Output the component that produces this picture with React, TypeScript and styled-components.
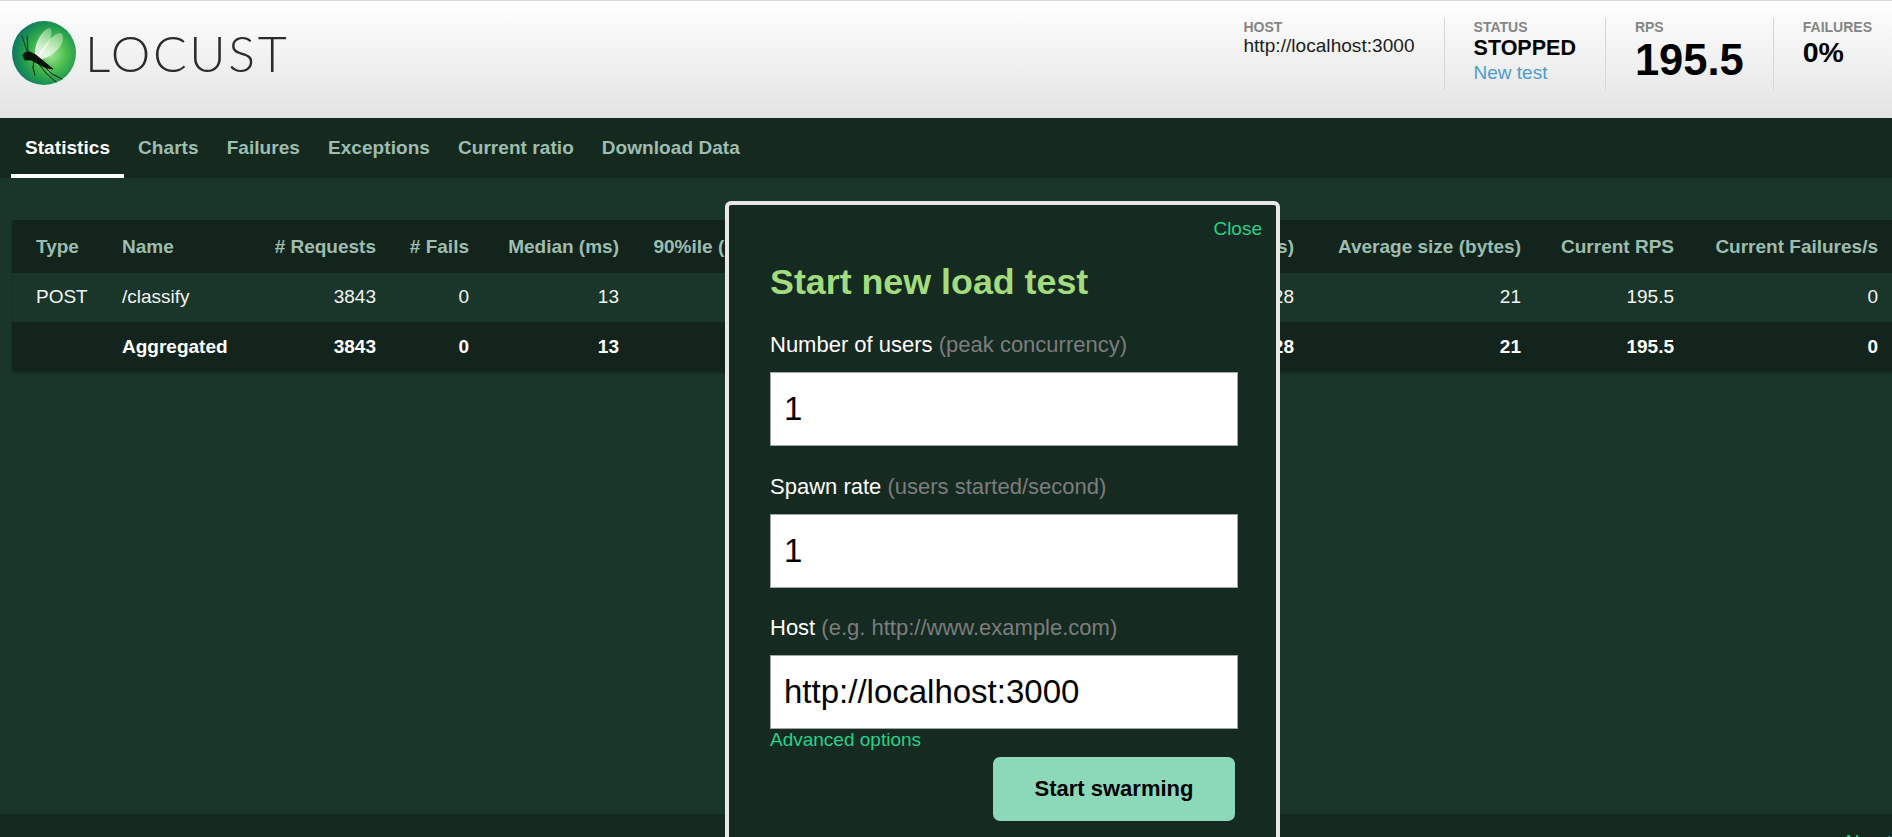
import React from "react";
import styled, { createGlobalStyle } from "styled-components";

const GlobalStyle = createGlobalStyle`
  html, body {
    margin: 0;
    height: 100%;
    overflow: hidden;
    font-family: "Liberation Sans", Arial, sans-serif;
    font-size: 19px;
    background: #1a3529;
  }
  #root {
    height: 100%;
  }
`;

const columns = [
  { title: "Type", width: 96, left: true },
  { title: "Name", width: 160, left: true },
  { title: "# Requests", width: 122 },
  { title: "# Fails", width: 93 },
  { title: "Median (ms)", width: 150 },
  { title: "90%ile (ms)", width: 139 },
  { title: "99%ile (ms)", width: 134 },
  { title: "Average (ms)", width: 134 },
  { title: "Min (ms)", width: 134 },
  { title: "Max (ms)", width: 134 },
  { title: "Average size (bytes)", width: 227 },
  { title: "Current RPS", width: 153 },
  { title: "Current Failures/s", width: 204 },
];

const rowCells = ["3843", "0", "13", "15", "21", "13.4", "8", "28", "21", "195.5", "0"];

function Logo() {
  return (
    <svg width="64" height="64" viewBox="12 21 64 64">
      <defs>
        <radialGradient id="orb" cx="60%" cy="52%" r="58%">
          <stop offset="0%" stopColor="#9fe69a" />
          <stop offset="40%" stopColor="#4fc04f" />
          <stop offset="75%" stopColor="#1f9a4f" />
          <stop offset="100%" stopColor="#0f7a62" />
        </radialGradient>
        <linearGradient id="wing" x1="0" y1="1" x2="1" y2="0">
          <stop offset="0%" stopColor="#ffffff" stopOpacity="0.95" />
          <stop offset="100%" stopColor="#e4f7d8" stopOpacity="0.35" />
        </linearGradient>
      </defs>
      <circle cx="44" cy="53" r="32" fill="url(#orb)" />
      <path d="M35 56 C34 44 41 31 49 28 C53 28 52 37 48 45 C44 52 39 58 35 56Z" fill="url(#wing)" />
      <path d="M37 58 C42 47 53 33 61 33 C65 36 63 46 55 52 C49 57 41 61 37 58Z" fill="url(#wing)" />
      <g fill="#0a140e" stroke="#0a140e" strokeLinecap="round">
        <path d="M23 55 C24 52 28 51 30 52 L36 55 L53 69 L46 68 L31 60 L25 60Z" strokeWidth="0.8" />
        <path d="M27 51 L22 36 M28 51 L27 36" fill="none" strokeWidth="0.8" />
        <path d="M34 60 L33 68 L35 75 M38 63 L46 73 L56 82 M44 66 L52 74 L62 79" fill="none" strokeWidth="1" />
      </g>
    </svg>
  );
}

function App() {
  return (
    <Page>
      <GlobalStyle />
      <Header>
        <Brand>
          <Logo />
          <Wordmark>LOCUST</Wordmark>
        </Brand>
        <Stats>
          <Stat>
            <StatLabel>HOST</StatLabel>
            <HostValue>http://localhost:3000</HostValue>
          </Stat>
          <Stat>
            <StatLabel>STATUS</StatLabel>
            <StatusValue>STOPPED</StatusValue>
            <NewTest href="#">New test</NewTest>
          </Stat>
          <Stat>
            <StatLabel>RPS</StatLabel>
            <RpsValue>195.5</RpsValue>
          </Stat>
          <Stat $last>
            <StatLabel>FAILURES</StatLabel>
            <FailValue>0%</FailValue>
          </Stat>
        </Stats>
      </Header>

      <Tabs>
        {["Statistics", "Charts", "Failures", "Exceptions", "Current ratio", "Download Data"].map(
          (t, i) => (
            <Tab key={t} $active={i === 0}>
              {t}
            </Tab>
          )
        )}
      </Tabs>

      <Main>
        <TableWrap>
          <Table>
            <colgroup>
              {columns.map((c) => (
                <Col key={c.title} $w={c.width} />
              ))}
            </colgroup>
            <thead>
              <tr>
                {columns.map((c) => (
                  <Th key={c.title} $left={c.left}>
                    {c.title}
                  </Th>
                ))}
              </tr>
            </thead>
            <tbody>
              <Row>
                <Td $left>POST</Td>
                <Td $left>/classify</Td>
                {rowCells.map((v, i) => (
                  <Td key={i}>{v}</Td>
                ))}
              </Row>
              <TotalRow>
                <Td $left />
                <Td $left>Aggregated</Td>
                {rowCells.map((v, i) => (
                  <Td key={i}>{v}</Td>
                ))}
              </TotalRow>
            </tbody>
          </Table>
        </TableWrap>
      </Main>

      <Footer>
        <FooterLink href="#">About</FooterLink>
      </Footer>

      <Modal>
        <CloseLink href="#">Close</CloseLink>
        <Title>Start new load test</Title>
        <Field>
          <FieldLabel>
            Number of users <Hint>(peak concurrency)</Hint>
          </FieldLabel>
          <Input defaultValue="1" />
        </Field>
        <Field>
          <FieldLabel>
            Spawn rate <Hint>(users started/second)</Hint>
          </FieldLabel>
          <Input defaultValue="1" />
        </Field>
        <Field>
          <FieldLabel>
            Host <Hint>(e.g. http://www.example.com)</Hint>
          </FieldLabel>
          <Input defaultValue="http://localhost:3000" />
        </Field>
        <Advanced href="#">Advanced options</Advanced>
        <Actions>
          <Submit>Start swarming</Submit>
        </Actions>
      </Modal>
    </Page>
  );
}

const Page = styled.div`
  position: relative;
  height: 100%;
  display: flex;
  flex-direction: column;
  overflow: hidden;
`;

const Header = styled.header`
  flex: none;
  box-sizing: border-box;
  height: 118px;
  display: flex;
  justify-content: space-between;
  border-top: 1px solid #dcdcdc;
  background: linear-gradient(#ffffff 0%, #e3e3e3 100%);
`;

const Brand = styled.div`
  display: flex;
  align-items: flex-start;
  gap: 9px;
  padding: 20px 0 0 12px;
`;

const Wordmark = styled.span`
  font-family: "Lato", sans-serif;
  font-weight: 300;
  font-size: 50px;
  line-height: 64px;
  letter-spacing: 2.6px;
  color: #2c2c2c;
`;

const Stats = styled.div`
  display: flex;
  align-items: flex-start;
  padding-top: 17px;
`;

const Stat = styled.div<{ $last?: boolean }>`
  box-sizing: border-box;
  height: 72px;
  padding: 0 ${(p) => (p.$last ? "20px" : "29px")} 0 29px;
  border-right: ${(p) => (p.$last ? "none" : "1px solid #d6d6d6")};
`;

const StatLabel = styled.div`
  font-size: 14px;
  line-height: 18px;
  font-weight: bold;
  color: #858585;
`;

const HostValue = styled.div`
  font-size: 19px;
  line-height: 20px;
  letter-spacing: 0.05px;
  color: #1c1c1c;
`;

const StatusValue = styled.div`
  font-size: 21.5px;
  line-height: 25px;
  font-weight: bold;
  color: #000;
`;

const NewTest = styled.a`
  display: block;
  font-size: 19px;
  line-height: 24px;
  color: #4d9bd1;
  text-decoration: none;
`;

const RpsValue = styled.div`
  font-size: 43.5px;
  line-height: 48px;
  font-weight: bold;
  color: #000;
`;

const FailValue = styled.div`
  font-size: 28.5px;
  line-height: 32px;
  font-weight: bold;
  color: #000;
`;

const Tabs = styled.nav`
  flex: none;
  box-sizing: border-box;
  height: 60px;
  display: flex;
  padding-left: 11px;
  background: #15291f;
`;

const Tab = styled.a<{ $active?: boolean }>`
  padding: 0 14px;
  font-size: 19px;
  font-weight: bold;
  letter-spacing: 0.06px;
  line-height: 59px;
  color: ${(p) => (p.$active ? "#ffffff" : "#9dbdaf")};
  border-bottom: 4px solid ${(p) => (p.$active ? "#ffffff" : "transparent")};
  height: 56px;
`;

const Main = styled.main`
  flex: 1;
  min-height: 0;
  padding: 42px 0 0 12px;
  background: #1a3529;
`;

const TableWrap = styled.div`
  border-radius: 4px 0 0 4px;
  box-shadow: 0 1px 0 1px #172e23;
  overflow: hidden;
`;

const Table = styled.table`
  table-layout: fixed;
  width: 1880px;
  border-collapse: collapse;
`;

const Col = styled.col<{ $w: number }>`
  width: ${(p) => p.$w}px;
`;

const Th = styled.th<{ $left?: boolean }>`
  height: 52px;
  padding: 1px 14px 0 ${(p) => (p.$left ? "24px" : "0")};
  text-align: ${(p) => (p.$left ? "left" : "right")};
  font-size: 19px;
  font-weight: bold;
  white-space: nowrap;
  color: #9dbdaf;
  background: #13241c;
  &:nth-child(2) {
    padding-left: 14px;
  }
`;

const Td = styled.td<{ $left?: boolean }>`
  padding: 0 14px 1px ${(p) => (p.$left ? "24px" : "0")};
  text-align: ${(p) => (p.$left ? "left" : "right")};
  font-size: 19px;
  white-space: nowrap;
  &:nth-child(2) {
    padding-left: 14px;
  }
`;

const Row = styled.tr`
  height: 49px;
  color: #f2f5f3;
  background: #1a3529;
`;

const TotalRow = styled.tr`
  height: 50px;
  font-weight: bold;
  color: #ffffff;
  background: #13241c;
`;

const Footer = styled.footer`
  flex: none;
  box-sizing: border-box;
  height: 23px;
  overflow: hidden;
  padding-top: 17px;
  text-align: right;
  background: #15291f;
`;

const FooterLink = styled.a`
  font-size: 19px;
  color: #24d18a;
  text-decoration: none;
`;

const Modal = styled.section`
  position: absolute;
  top: 201px;
  left: 725px;
  box-sizing: border-box;
  width: 555px;
  height: 700px;
  padding: 55px 38px 0 41px;
  border: 4px solid #e8e8e8;
  border-radius: 6px;
  background: #152a21;
`;

const CloseLink = styled.a`
  position: absolute;
  top: 12px;
  right: 14px;
  font-size: 19px;
  line-height: 24px;
  color: #24d18a;
  text-decoration: none;
`;

const Title = styled.h2`
  margin: 0;
  font-size: 35.8px;
  line-height: 44px;
  font-weight: bold;
  color: #a3dc7e;
`;

const Field = styled.div`
  margin-top: 28px;
  & + & + & {
    margin-top: 27px;
  }
`;

const FieldLabel = styled.label`
  display: block;
  font-size: 22px;
  line-height: 26px;
  color: #ffffff;
  margin-bottom: 14px;
`;

const Hint = styled.span`
  color: #7d7d7d;
`;

const Input = styled.input`
  display: block;
  box-sizing: border-box;
  width: 468px;
  height: 74px;
  padding: 0 13px;
  border: 1px solid #a0a8a4;
  border-radius: 0;
  outline: none;
  background: #ffffff;
  font-family: "Liberation Sans", Arial, sans-serif;
  font-size: 33px;
  color: #000;
`;

const Advanced = styled.a`
  display: block;
  font-size: 19px;
  line-height: 22px;
  color: #24d18a;
  text-decoration: none;
`;

const Actions = styled.div`
  display: flex;
  justify-content: flex-end;
  margin: 6px 3px 0 0;
`;

const Submit = styled.button`
  width: 242px;
  height: 64px;
  border: none;
  border-radius: 7px;
  background: #8bd9b9;
  font-family: "Liberation Sans", Arial, sans-serif;
  font-size: 22px;
  font-weight: bold;
  color: #000;
`;

export default App;
